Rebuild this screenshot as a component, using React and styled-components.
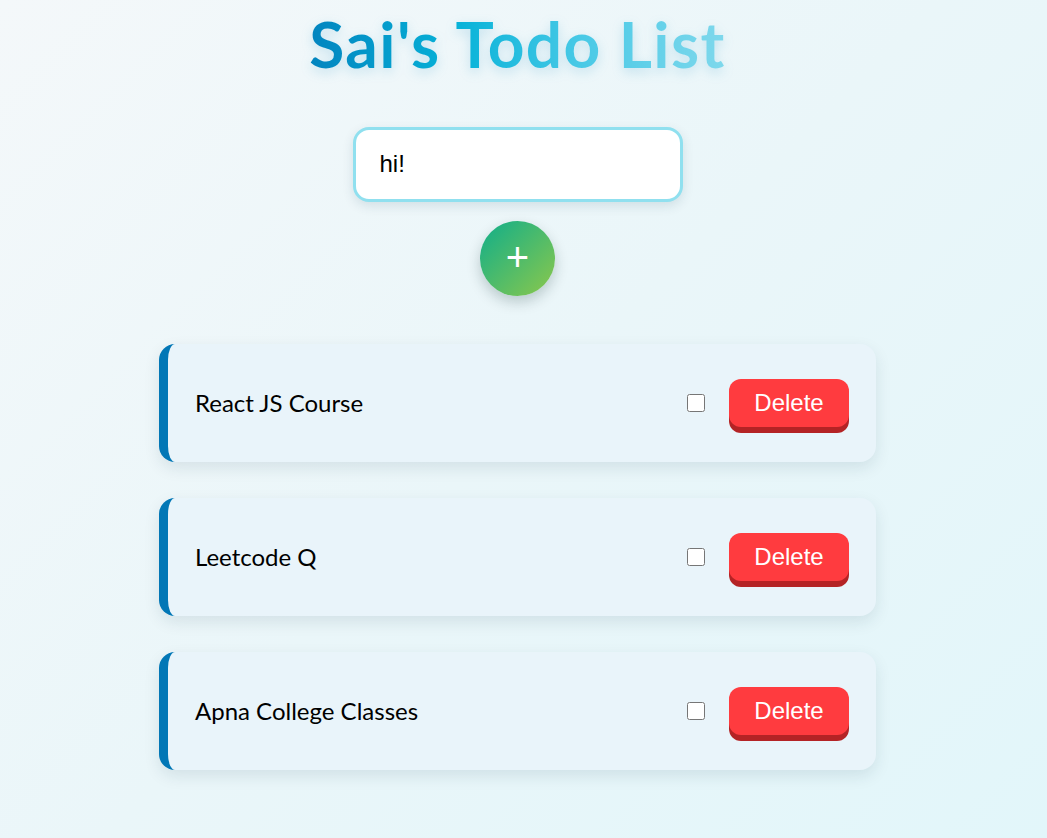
import styled, { createGlobalStyle } from "styled-components";
import { useState } from "react";

const GlobalStyle = createGlobalStyle`
  html, body {
    margin: 0;
    padding: 0;
  }
  body {
    min-height: 100vh;
    background: linear-gradient(135deg, #f4f8fa 0%, #eaf6f9 50%, #e2f6fa 100%);
    font-family: "Trebuchet MS", Lato, "DejaVu Sans", sans-serif;
  }
`;

const Page = styled.div`
  display: flex;
  flex-direction: column;
  align-items: center;
  padding: 6px 12px 40px 0;
`;

const Title = styled.h1`
  margin: 0;
  font-size: 64px;
  font-weight: 700;
  letter-spacing: 1.4px;
  line-height: 1.2;
  background: linear-gradient(90deg, #0284bf 0%, #06b2d8 35%, #48c9e6 65%, #7fd8ec 100%);
  -webkit-background-clip: text;
  background-clip: text;
  color: transparent;
  filter: drop-shadow(0 4px 6px rgba(2, 132, 191, 0.18));
`;

const Input = styled.input`
  margin-top: 44px;
  width: 330px;
  height: 75px;
  box-sizing: border-box;
  border: 3px solid #90e0ef;
  border-radius: 16px;
  background: #fff;
  padding: 0 24px;
  font-family: "Liberation Sans", Arial, sans-serif;
  font-size: 24px;
  color: #000;
  outline: none;
  box-shadow: 0 4px 12px rgba(0, 60, 80, 0.12);
`;

const AddButton = styled.button`
  margin-top: 19px;
  width: 75px;
  height: 75px;
  border: none;
  border-radius: 50%;
  background: linear-gradient(135deg, #0fae8a 0%, #8cc84b 100%);
  color: #fff;
  font-family: "Liberation Sans", Arial, sans-serif;
  font-size: 40px;
  line-height: 1;
  display: flex;
  align-items: center;
  justify-content: center;
  padding: 0 0 3px;
  box-shadow: 0 6px 14px rgba(0, 40, 40, 0.22);
  cursor: pointer;
`;

const List = styled.ul`
  list-style: none;
  margin: 48px 0 0;
  padding: 0;
  display: flex;
  flex-direction: column;
  gap: 36px;
`;

const Card = styled.li`
  width: 717px;
  height: 118px;
  box-sizing: border-box;
  display: flex;
  align-items: center;
  padding: 0 27px 0 27px;
  background: #e9f4fa;
  border-left: 9px solid #0277b6;
  border-radius: 16px;
  box-shadow: 0 6px 16px rgba(0, 50, 70, 0.1);
`;

const Label = styled.span`
  flex: 1;
  font-size: 24px;
  color: #000;
`;

const Check = styled.input`
  width: 18px;
  height: 18px;
  margin: 0 24px 0 0;
`;

const DeleteButton = styled.button`
  width: 120px;
  height: 48px;
  border: none;
  border-radius: 12px;
  background: #ff3b3f;
  color: #fff;
  font-family: "Liberation Sans", Arial, sans-serif;
  font-size: 24px;
  padding: 0;
  box-shadow: 0 6px 0 #b42325;
  cursor: pointer;
`;

export default function App() {
  const [text, setText] = useState("hi!");
  const [todos, setTodos] = useState([
    "React JS Course",
    "Leetcode Q",
    "Apna College Classes",
  ]);

  return (
    <>
      <GlobalStyle />
      <Page>
        <Title>Sai's Todo List</Title>
        <Input value={text} onChange={e => setText(e.target.value)} />
        <AddButton
          onClick={() => {
            if (text.trim()) setTodos([...todos, text]);
          }}
        >
          +
        </AddButton>
        <List>
          {todos.map((t, i) => (
            <Card key={i}>
              <Label>{t}</Label>
              <Check type="checkbox" />
              <DeleteButton onClick={() => setTodos(todos.filter((_, j) => j !== i))}>
                Delete
              </DeleteButton>
            </Card>
          ))}
        </List>
      </Page>
    </>
  );
}
